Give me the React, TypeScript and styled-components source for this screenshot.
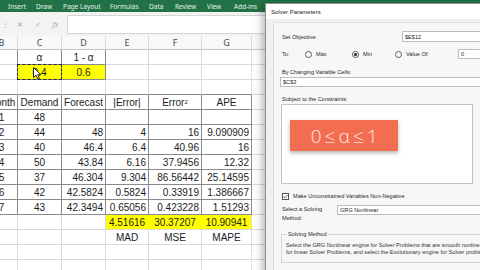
import React from 'react';
import styled, { createGlobalStyle } from 'styled-components';

const GlobalStyle = createGlobalStyle`
  html, body {
    margin: 0;
    padding: 0;
    background: #fff;
  }
  body {
    font-family: "Liberation Sans", Arial, sans-serif;
  }
`;

const Screen = styled.div`
  position: relative;
  width: 480px;
  height: 270px;
  overflow: hidden;
  background: #fff;
  display: flex;
  flex-direction: column;
`;

const Ribbon = styled.div`
  height: 12px;
  flex-shrink: 0;
  background: #217346;
  display: flex;
  align-items: center;
  padding-left: 8px;
`;

const Tab = styled.span<{ $w: number }>`
  width: ${p => p.$w}px;
  flex-shrink: 0;
  color: #e6f1ea;
  font: 6.5px "Noto Sans", sans-serif;
  white-space: nowrap;
`;

const FormulaBar = styled.div`
  height: 24px;
  flex-shrink: 0;
  background: #f3f3f3;
  display: flex;
  align-items: center;
`;

const FormulaTools = styled.div`
  width: 67px;
  display: flex;
  align-items: center;
  padding-left: 2px;
  box-sizing: border-box;
  color: #a6a6a6;
  font: 7px "Noto Sans", sans-serif;
`;

const ToolGlyph = styled.span<{ $w: number; $italic?: boolean }>`
  width: ${p => p.$w}px;
  text-align: center;
  font-style: ${p => (p.$italic ? 'italic' : 'normal')};
`;

const FormulaInput = styled.div`
  flex: 1;
  height: 17px;
  background: #fff;
  border: 1px solid #d6d6d6;
  border-right: none;
`;

const Sheet = styled.div`
  display: grid;
  grid-template-columns: 32px 44px 44px 43px 53px 50px 40px;
  grid-template-rows: 14px;
  grid-auto-rows: 15px;
  margin-left: -14px;
  font-family: "Liberation Sans Narrow", "Liberation Sans", Arial, sans-serif;
  font-size: 10px;
  color: #1c1c1c;
`;

const ColHead = styled.div`
  box-sizing: border-box;
  background: #f8f8f8;
  border-right: 1px solid #d8d8d8;
  border-bottom: 1px solid #c4c4c4;
  display: flex;
  align-items: center;
  justify-content: center;
  font: 9px "Noto Sans", sans-serif;
  color: #4a4a4a;
`;

const Cell = styled.div<{
  $align: string;
  $fill: string;
  $right: string;
  $bottom: string;
  $dash?: boolean;
  $ants?: boolean;
}>`
  position: relative;
  box-sizing: border-box;
  background: ${p => p.$fill};
  border-right: 1px ${p => (p.$dash ? 'dashed' : 'solid')} ${p => p.$right};
  border-bottom: 1px solid ${p => p.$bottom};
  display: flex;
  align-items: center;
  justify-content: ${p => p.$align};
  padding: 0 2px;
  white-space: nowrap;

  sup {
    font-size: 6px;
    line-height: 0;
    vertical-align: 5px;
  }

  ${p =>
    p.$ants &&
    `
    &::after {
      content: '';
      position: absolute;
      inset: -1px -1px -1px -1px;
      border: 1px dashed #2b2b2b;
    }
  `}
`;

const Pointer = styled.svg`
  position: absolute;
  left: 15px;
  top: 2px;
  z-index: 2;
`;

/* Solver dialog */

const Dialog = styled.div`
  position: absolute;
  top: 3px;
  left: 265px;
  width: 230px;
  height: 272px;
  box-sizing: border-box;
  background: #f0f0f0;
  border-left: 1px solid #8f8f8f;
  border-top: 1px solid #8f8f8f;
  box-shadow: -3px 2px 8px rgba(0, 0, 0, 0.28);
  display: flex;
  flex-direction: column;
  font-family: "Liberation Sans", Arial, sans-serif;
  font-size: 5.6px;
  color: #262626;
`;

const TitleBar = styled.div`
  height: 15px;
  flex-shrink: 0;
  background: #fff;
  display: flex;
  align-items: center;
  padding-left: 5px;
  font-size: 6px;
  color: #1e1e1e;
`;

const Body = styled.div`
  flex: 1;
  display: flex;
  padding: 3px 0 0 7px;
`;

const Panel = styled.div`
  flex: 1;
  display: flex;
  flex-direction: column;
  padding: 8px 0 0 8px;
  background: #f7f7f7;
  border-left: 1px solid #d9d9d9;
  border-top: 1px solid #e2e2e2;
`;

const FieldRow = styled.div<{ $label: number }>`
  display: grid;
  grid-template-columns: ${p => p.$label}px 1fr;
  align-items: center;
`;

const TextBox = styled.div<{ $h?: number }>`
  height: ${p => p.$h ?? 10}px;
  box-sizing: border-box;
  background: #fff;
  border: 1px solid #bcbcbc;
  border-right: none;
  display: flex;
  align-items: center;
  padding-left: 2px;
`;

const ToRow = styled.div`
  margin-top: 7px;
  height: 10px;
  display: flex;
  align-items: center;
`;

const ToLabel = styled.span`
  width: 23px;
`;

const RadioItem = styled.label<{ $w: number }>`
  width: ${p => p.$w}px;
  display: flex;
  align-items: center;
  gap: 4px;
`;

const RadioDot = styled.span<{ $on?: boolean }>`
  width: 7px;
  height: 7px;
  box-sizing: border-box;
  border-radius: 50%;
  border: 1px solid #555;
  background: #fff;
  display: flex;
  align-items: center;
  justify-content: center;

  &::after {
    content: '';
    width: 3px;
    height: 3px;
    border-radius: 50%;
    background: ${p => (p.$on ? '#222' : 'transparent')};
  }
`;

const ValueBox = styled(TextBox)`
  flex: 1;
`;

const Caption = styled.div<{ $top: number }>`
  margin-top: ${p => p.$top}px;
  line-height: 7px;
`;

const WideBox = styled(TextBox)`
  margin: 1px 0 0 -2px;
`;

const ConstraintBox = styled.div`
  margin: 1px 0 0 -1px;
  width: 192px;
  height: 80px;
  box-sizing: border-box;
  background: #fff;
  border: 1px solid #c3c3c3;
  padding: 15px 0 0 8px;
`;

const Badge = styled.div`
  width: 108px;
  height: 31px;
  background: #f36e51;
  box-shadow: 0 2px 4px rgba(0, 0, 0, 0.3);
  display: flex;
  align-items: center;
  justify-content: center;
  color: #fde9e3;
  font: 300 19px "Open Sans", "DejaVu Sans", sans-serif;
  letter-spacing: -0.4px;
  word-spacing: -1px;
`;

const CheckRow = styled.div`
  margin-top: 8px;
  height: 8px;
  display: flex;
  align-items: center;
  gap: 4px;
`;

const CheckBox = styled.span`
  width: 7px;
  height: 7px;
  box-sizing: border-box;
  border: 1px solid #555;
  background: #fff;
  display: flex;
  align-items: center;
  justify-content: center;
`;

const MethodRow = styled.div`
  margin-top: 5px;
  display: grid;
  grid-template-columns: 55px 1fr;
  align-items: start;
`;

const MethodLabel = styled.div`
  line-height: 9px;
`;

const Group = styled.fieldset`
  margin: 8px 0 0 -1px;
  padding: 5px 0 7px 4px;
  border: 1px solid #d6d6d6;
  border-right: none;
  min-width: 0;
`;

const Legend = styled.legend`
  padding: 0 1px;
  margin-left: 1px;
  font-size: 5.6px;
`;

const GroupText = styled.div`
  line-height: 6.5px;
  white-space: nowrap;
  color: #333;
`;

type Align = 'flex-start' | 'center' | 'flex-end';
type CellData = { t?: React.ReactNode; a?: Align; fill?: string };

const YELLOW = '#ffff00';
const GRID = '#dadada';
const DARK = '#8a8a8a';

const c = (t: React.ReactNode, fill?: string): CellData => ({ t, a: 'center', fill });
const r = (t: string): CellData => ({ t, a: 'flex-end' });
const E: CellData = {};

const tabs: [string, number][] = [
  ['Insert', 28],
  ['Draw', 27],
  ['Page Layout', 47],
  ['Formulas', 39],
  ['Data', 26],
  ['Review', 32],
  ['View', 27],
  ['Add-ins', 40],
];
const letters = ['B', 'C', 'D', 'E', 'F', 'G', 'H'];

const rows: CellData[][] = [
  [E, c('α'), c('1 - α'), E, E, E, E],
  [E, c('0.4', YELLOW), c('0.6', YELLOW), E, E, E, E],
  [E, E, E, E, E, E, E],
  [c('Month'), c('Demand'), c('Forecast'), c('|Error|'), c(<>Error<sup>2</sup></>), c('APE'), E],
  [c('1'), c('48'), E, E, E, E, E],
  [c('2'), c('44'), r('48'), r('4'), r('16'), r('9.090909'), E],
  [c('3'), c('40'), r('46.4'), r('6.4'), r('40.96'), r('16'), E],
  [c('4'), c('50'), r('43.84'), r('6.16'), r('37.9456'), r('12.32'), E],
  [c('5'), c('37'), r('46.304'), r('9.304'), r('86.56442'), r('25.14595'), E],
  [c('6'), c('42'), r('42.5824'), r('0.5824'), r('0.33919'), r('1.386667'), E],
  [c('7'), c('43'), r('42.3494'), r('0.65056'), r('0.423228'), r('1.51293'), E],
  [E, E, E, c('4.51616', YELLOW), c('30.37207', YELLOW), c('10.90941', YELLOW), E],
  [E, E, E, c('MAD'), c('MSE'), c('MAPE'), E],
  [E, E, E, E, E, E, E],
  [E, E, E, E, E, E, E],
];

const inTable = (ri: number, ci: number) =>
  (ri >= 0 && ri <= 1 && ci >= 1 && ci <= 2) || (ri >= 3 && ri <= 10 && ci >= 0 && ci <= 5);

const edgeColor = (ri: number, ci: number, nr: number, nc: number, fill?: string) => {
  if (inTable(ri, ci) || inTable(nr, nc)) return DARK;
  if (fill && rows[nr]?.[nc]?.fill) return fill;
  return GRID;
};

const SolverDialog = () => (
  <Dialog>
    <TitleBar>Solver Parameters</TitleBar>
    <Body>
      <Panel>
        <FieldRow $label={120}>
          <span>Set Objective:</span>
          <TextBox $h={11}>$E$12</TextBox>
        </FieldRow>

        <ToRow>
          <ToLabel>To:</ToLabel>
          <RadioItem $w={47}>
            <RadioDot />
            Max
          </RadioItem>
          <RadioItem $w={43}>
            <RadioDot $on />
            Min
          </RadioItem>
          <RadioItem $w={63}>
            <RadioDot />
            Value Of:
          </RadioItem>
          <ValueBox>0</ValueBox>
        </ToRow>

        <Caption $top={10}>By Changing Variable Cells:</Caption>
        <WideBox>$C$3</WideBox>

        <Caption $top={9}>Subject to the Constraints:</Caption>
        <ConstraintBox>
          <Badge>0 ≤ α ≤ 1</Badge>
        </ConstraintBox>

        <CheckRow>
          <CheckBox>
            <svg width="6" height="5" viewBox="0 0 6 5">
              <path d="M0.6 2.6 L2.2 4 L5.4 0.8" fill="none" stroke="#222" strokeWidth="0.9" />
            </svg>
          </CheckBox>
          Make Unconstrained Variables Non-Negative
        </CheckRow>

        <MethodRow>
          <MethodLabel>
            Select a Solving
            <br />
            Method:
          </MethodLabel>
          <TextBox>GRG Nonlinear</TextBox>
        </MethodRow>

        <Group>
          <Legend>Solving Method</Legend>
          <GroupText>
            Select the GRG Nonlinear engine for Solver Problems that are smooth nonlinear. Select the LP Simplex engine
          </GroupText>
          <GroupText>
            for linear Solver Problems, and select the Evolutionary engine for Solver problems that are non-smooth.
          </GroupText>
        </Group>
      </Panel>
    </Body>
  </Dialog>
);

export default function App() {
  return (
    <>
      <GlobalStyle />
      <Screen>
        <Ribbon>
          {tabs.map(([t, w]) => (
            <Tab key={t} $w={w}>
              {t}
            </Tab>
          ))}
        </Ribbon>

        <FormulaBar>
          <FormulaTools>
            <ToolGlyph $w={6}>⋮</ToolGlyph>
            <ToolGlyph $w={24}>✕</ToolGlyph>
            <ToolGlyph $w={13}>✓</ToolGlyph>
            <ToolGlyph $w={24} $italic>
              fx
            </ToolGlyph>
          </FormulaTools>
          <FormulaInput />
        </FormulaBar>

        <Sheet>
          {letters.map(l => (
            <ColHead key={l}>{l}</ColHead>
          ))}
          {rows.map((row, ri) =>
            row.map((cell, ci) => (
              <Cell
                key={`${ri}-${ci}`}
                $align={cell.a ?? 'center'}
                $fill={cell.fill ?? '#fff'}
                $right={edgeColor(ri, ci, ri, ci + 1, cell.fill)}
                $bottom={edgeColor(ri, ci, ri + 1, ci, cell.fill)}
                $dash={ci === 5 && !inTable(ri, ci) && !cell.fill}
                $ants={ri === 1 && ci === 1}
              >
                {cell.t}
                {ri === 1 && ci === 1 && (
                  <Pointer width="9" height="13" viewBox="0 0 9 13">
                    <path
                      d="M0.5 0.5 L0.5 10.5 L3 8.3 L4.8 12.3 L6.4 11.6 L4.7 7.7 L8 7.7 Z"
                      fill="#fff"
                      stroke="#111"
                      strokeWidth="0.9"
                    />
                  </Pointer>
                )}
              </Cell>
            ))
          )}
        </Sheet>

        <SolverDialog />
      </Screen>
    </>
  );
}
